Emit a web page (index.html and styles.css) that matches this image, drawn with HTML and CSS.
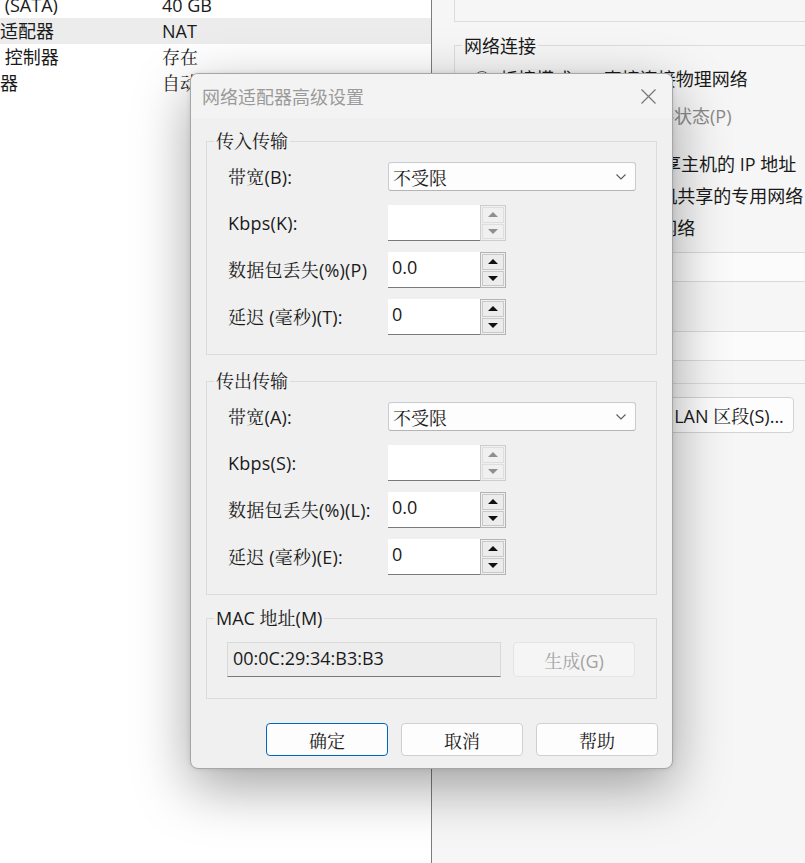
FILE: index.html
```html
<!DOCTYPE html>
<html lang="zh-CN">
<head>
<meta charset="utf-8">
<title>网络适配器高级设置</title>
<link rel="stylesheet" href="styles.css">
</head>
<body>
<div class="screen">
  <div class="hw-list">
    <div class="hw-rows">
      <div class="hw-row"><span class="hw-name">&nbsp;(SATA)</span><span class="hw-val">40 GB</span></div>
      <div class="hw-row selected"><span class="hw-name">适配器</span><span class="hw-val">NAT</span></div>
      <div class="hw-row"><span class="hw-name">&nbsp;控制器</span><span class="hw-val song">存在</span></div>
      <div class="hw-row"><span class="hw-name">器</span><span class="hw-val song">自动检测</span></div>
    </div>
  </div>
  <div class="settings">
    <div class="dev-status"></div>
    <fieldset class="net-group">
      <legend>网络连接</legend>
      <div class="opt opt-1"><span class="radio"></span>桥接模式(B): 直接连接物理网络</div>
      <div class="opt opt-2 dim"><span class="check"></span>复制物理网络连接状态(P)</div>
      <div class="opt opt-3"><span class="radio on"></span>NAT 模式(N): 用于共享主机的 IP 地址</div>
      <div class="opt opt-4"><span class="radio"></span>仅主机模式(H): 与主机共享的专用网络</div>
      <div class="opt opt-4"><span class="radio"></span>自定义(U): 特定虚拟网络</div>
      <div class="net-combo combo-1"></div>
      <div class="opt opt-5"><span class="radio"></span>LAN 区段(L):</div>
      <div class="net-combo combo-2"></div>
    </fieldset>
    <div class="lan-row"><div class="lan-btn"><span class="song">LAN 区段(S)...</span></div></div>
  </div>
</div>

<div class="dialog">
  <div class="titlebar">
    <span class="title">网络适配器高级设置</span>
    <svg class="close" viewBox="0 0 15 15"><path d="M0.5 0.5 L14.5 14.5 M14.5 0.5 L0.5 14.5" stroke="#7a7a7a" stroke-width="1.3" fill="none"/></svg>
  </div>
  <div class="dlg-body">
    <fieldset class="grp grp-in">
      <legend>传入传输</legend>
      <div class="row combo-row">
        <label>带宽(B):</label>
        <div class="combo"><span>不受限</span><svg class="chev" viewBox="0 0 10 6"><path d="M0.5 0.5 L5 5 L9.5 0.5" stroke="#5a5a5a" stroke-width="1.1" fill="none"/></svg></div>
      </div>
      <div class="row spin-row first">
        <label>Kbps(K):</label>
        <div class="spin disabled"><div class="spin-input"></div><div class="spin-btns"><span class="sbtn"><i class="up"></i></span><span class="sbtn"><i class="down"></i></span></div></div>
      </div>
      <div class="row spin-row">
        <label>数据包丢失(%)(P)</label>
        <div class="spin"><div class="spin-input">0.0</div><div class="spin-btns"><span class="sbtn"><i class="up"></i></span><span class="sbtn"><i class="down"></i></span></div></div>
      </div>
      <div class="row spin-row">
        <label>延迟 (毫秒)(T):</label>
        <div class="spin"><div class="spin-input">0</div><div class="spin-btns"><span class="sbtn"><i class="up"></i></span><span class="sbtn"><i class="down"></i></span></div></div>
      </div>
    </fieldset>

    <fieldset class="grp grp-out">
      <legend>传出传输</legend>
      <div class="row combo-row">
        <label>带宽(A):</label>
        <div class="combo"><span>不受限</span><svg class="chev" viewBox="0 0 10 6"><path d="M0.5 0.5 L5 5 L9.5 0.5" stroke="#5a5a5a" stroke-width="1.1" fill="none"/></svg></div>
      </div>
      <div class="row spin-row first">
        <label>Kbps(S):</label>
        <div class="spin disabled"><div class="spin-input"></div><div class="spin-btns"><span class="sbtn"><i class="up"></i></span><span class="sbtn"><i class="down"></i></span></div></div>
      </div>
      <div class="row spin-row">
        <label>数据包丢失(%)(L):</label>
        <div class="spin"><div class="spin-input">0.0</div><div class="spin-btns"><span class="sbtn"><i class="up"></i></span><span class="sbtn"><i class="down"></i></span></div></div>
      </div>
      <div class="row spin-row">
        <label>延迟 (毫秒)(E):</label>
        <div class="spin"><div class="spin-input">0</div><div class="spin-btns"><span class="sbtn"><i class="up"></i></span><span class="sbtn"><i class="down"></i></span></div></div>
      </div>
    </fieldset>

    <fieldset class="grp grp-mac">
      <legend>MAC 地址(M)</legend>
      <div class="mac-row">
        <div class="mac-field">00:0C:29:34:B3:B3</div>
        <div class="btn gen">生成(G)</div>
      </div>
    </fieldset>

    <div class="buttons">
      <div class="btn primary">确定</div>
      <div class="btn">取消</div>
      <div class="btn">帮助</div>
    </div>
  </div>
</div>
</body>
</html>
```

FILE: styles.css
```css
* { box-sizing: border-box; }

html, body {
  margin: 0;
  padding: 0;
}

body {
  width: 805px;
  height: 863px;
  overflow: hidden;
  position: relative;
  font-family: "Open Sans", "Noto Sans CJK SC", sans-serif;
  font-size: 18px;
  color: #1a1a1a;
  background: #ffffff;
}

.song {
  font-family: "Open Sans", "Noto Serif CJK SC", "Noto Sans CJK SC", serif;
}

.screen {
  display: flex;
  width: 805px;
  height: 863px;
}

/* ---------- left hardware list ---------- */
.hw-list {
  width: 432px;
  flex: none;
  background: #ffffff;
  border-right: 1px solid #7d7d7d;
  overflow: hidden;
}

.hw-rows {
  margin-top: -8px;
}

.hw-row {
  display: flex;
  height: 26px;
  line-height: 26px;
  white-space: nowrap;
}

.hw-row.selected {
  background: #ececec;
}

.hw-name {
  width: 162px;
  flex: none;
  overflow: hidden;
}

/* ---------- right settings panel ---------- */
.settings {
  flex: 1;
  background: #f6f6f6;
  overflow: hidden;
  padding-left: 22px;
  white-space: nowrap;
}

.dev-status {
  width: 500px;
  height: 22px;
  border-left: 1px solid #dcdcdc;
  border-bottom: 1px solid #dcdcdc;
}

.net-group {
  width: 500px;
  margin: 11px 0 0;
  padding: 0 0 22px;
  border: 1px solid #dcdcdc;
  min-width: 0;
}

.net-group legend {
  margin-left: 7px;
  padding: 0 2px;
  line-height: 24px;
  font-family: "Noto Sans CJK SC", sans-serif;
}

.opt {
  display: flex;
  align-items: center;
  height: 24px;
  line-height: 24px;
  padding-left: 19px;
}

.opt-1 { margin-top: 10px; }
.opt-2 { margin-top: 13px; padding-left: 49px; }
.opt-3 { margin-top: 24px; }
.opt-4 { margin-top: 8px; }
.opt-5 { margin-top: 12px; }

.dim { color: #8a8a8a; }

.radio {
  width: 16px;
  height: 16px;
  flex: none;
  border: 1px solid #5c5c5c;
  border-radius: 50%;
  background: #fff;
  margin-right: 10px;
}

.check {
  width: 16px;
  height: 16px;
  flex: none;
  border: 1px solid #b5b5b5;
  border-radius: 3px;
  margin-right: 10px;
}

.net-combo {
  margin-left: 45px;
  width: 420px;
  height: 30px;
  border: 1px solid #dadada;
  border-radius: 3px;
  background: #fbfbfb;
}

.combo-1 { margin-top: 12px; }
.combo-2 { margin-top: 13px; }

.lan-row {
  display: flex;
  margin-top: 13px;
  padding-left: 210px;
}

.lan-btn {
  width: 130px;
  height: 36px;
  flex: none;
  display: flex;
  align-items: center;
  justify-content: center;
  background: #fdfdfd;
  border: 1px solid #d3d3d3;
  border-radius: 4px;
}

/* ---------- dialog ---------- */
.dialog {
  position: absolute;
  left: 190px;
  top: 73px;
  width: 483px;
  height: 696px;
  display: flex;
  flex-direction: column;
  background: #f0f0f0;
  border: 1px solid #a6a6a6;
  border-radius: 8px;
  box-shadow: 0 18px 55px rgba(0, 0, 0, 0.36), 0 0 5px rgba(0, 0, 0, 0.1);
  overflow: hidden;
  font-family: "Open Sans", "Noto Serif CJK SC", "Noto Sans CJK SC", serif;
}

.titlebar {
  height: 44px;
  flex: none;
  display: flex;
  align-items: center;
  justify-content: space-between;
  padding: 0 16px 0 11px;
  background: #f3f3f3;
}

.title {
  font-family: "Noto Sans CJK SC", sans-serif;
  font-size: 18px;
  color: #9a9a9a;
}

.close {
  width: 15px;
  height: 15px;
  display: block;
}

.dlg-body {
  flex: 1;
  display: flex;
  flex-direction: column;
  padding: 11px 15px 0;
}

.grp {
  margin: 0;
  padding: 9px 0 19px;
  border: 1px solid #dcdcdc;
  min-width: 0;
}

.grp legend {
  margin-left: 7px;
  padding: 0 2px;
  line-height: 24px;
}

.grp-out { margin-top: 14px; }
.grp-mac { margin-top: 11px; padding: 12px 0 21px; }

.row {
  display: flex;
  align-items: center;
  padding-left: 21px;
}

.row label {
  width: 160px;
  flex: none;
  line-height: 24px;
  white-space: nowrap;
  letter-spacing: 0.2px;
}

.combo-row { height: 29px; }

.combo {
  width: 248px;
  height: 29px;
  display: flex;
  align-items: center;
  justify-content: space-between;
  padding: 0 9px 0 4px;
  background: #fdfdfd;
  border: 1px solid #cbcbcb;
  border-bottom-color: #b5b5b5;
  border-radius: 3px;
}

.chev {
  width: 10px;
  height: 6px;
  display: block;
}

.spin-row {
  height: 36px;
  margin-top: 11px;
}

.spin-row.first { margin-top: 14px; }

.spin {
  display: flex;
  height: 36px;
}

.spin-input {
  width: 92px;
  height: 36px;
  padding: 3px 4px 0;
  line-height: 24px;
  background: #ffffff;
  border-bottom: 1px solid #7a7a7a;
  font-family: "Open Sans", sans-serif;
}

.spin-btns {
  width: 26px;
  height: 36px;
  display: flex;
  flex-direction: column;
  gap: 1px;
  padding: 1px;
  border: 1px solid #b3b3b3;
}

.sbtn {
  flex: 1;
  display: flex;
  align-items: center;
  justify-content: center;
  background: #ececec;
  border: 1px solid #c9c9c9;
}

.sbtn i {
  width: 0;
  height: 0;
  border-left: 5px solid transparent;
  border-right: 5px solid transparent;
}

.sbtn i.up { border-bottom: 5px solid #111; }
.sbtn i.down { border-top: 5px solid #111; }

.spin.disabled .spin-btns { border-color: #cdcdcd; }
.spin.disabled .sbtn { background: #f0f0f0; border-color: #dedede; }
.spin.disabled .sbtn i.up { border-bottom-color: #8f8f8f; }
.spin.disabled .sbtn i.down { border-top-color: #8f8f8f; }

.mac-row {
  display: flex;
  gap: 12px;
  padding-left: 20px;
}

.mac-field {
  width: 274px;
  height: 35px;
  padding: 3px 5px 0;
  line-height: 24px;
  background: #ededed;
  border: 1px solid #d9d9d9;
  border-bottom-color: #7a7a7a;
  font-family: "Open Sans", sans-serif;
}

.btn {
  width: 122px;
  height: 33px;
  flex: none;
  display: flex;
  align-items: center;
  justify-content: center;
  background: #fdfdfd;
  border: 1px solid #d0d0d0;
  border-radius: 4px;
}

.btn.gen {
  height: 35px;
  background: #f5f5f5;
  border-color: #e4e4e4;
  color: #a3a3a3;
}

.btn.primary {
  border-color: #0067c0;
}

.buttons {
  display: flex;
  justify-content: flex-end;
  gap: 13px;
  margin: 24px -1px 0 0;
}
```
